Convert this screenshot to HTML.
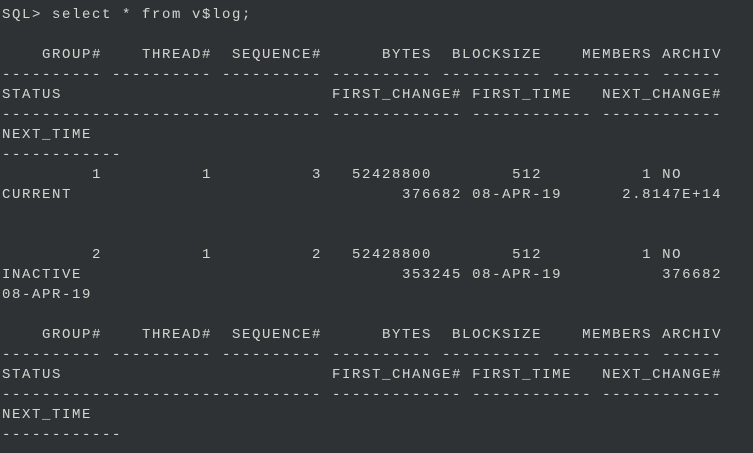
<!DOCTYPE html>
<html><head><meta charset="utf-8"><style>
html,body{margin:0;padding:0;background:#2e3235;width:753px;height:453px;overflow:hidden}
pre{margin:0;position:absolute;left:2px;top:5px;font-family:"Liberation Mono",monospace;font-size:14px;letter-spacing:1.6px;line-height:20px;color:#d3d7cf}
</style></head><body><pre>SQL&gt; select * from v$log;

    GROUP#    THREAD#  SEQUENCE#      BYTES  BLOCKSIZE    MEMBERS ARCHIV
---------- ---------- ---------- ---------- ---------- ---------- ------
STATUS                           FIRST_CHANGE# FIRST_TIME   NEXT_CHANGE#
-------------------------------- ------------- ------------ ------------
NEXT_TIME
------------
         1          1          3   52428800        512          1 NO
CURRENT                                 376682 08-APR-19      2.8147E+14


         2          1          2   52428800        512          1 NO
INACTIVE                                353245 08-APR-19          376682
08-APR-19

    GROUP#    THREAD#  SEQUENCE#      BYTES  BLOCKSIZE    MEMBERS ARCHIV
---------- ---------- ---------- ---------- ---------- ---------- ------
STATUS                           FIRST_CHANGE# FIRST_TIME   NEXT_CHANGE#
-------------------------------- ------------- ------------ ------------
NEXT_TIME
------------</pre></body></html>
